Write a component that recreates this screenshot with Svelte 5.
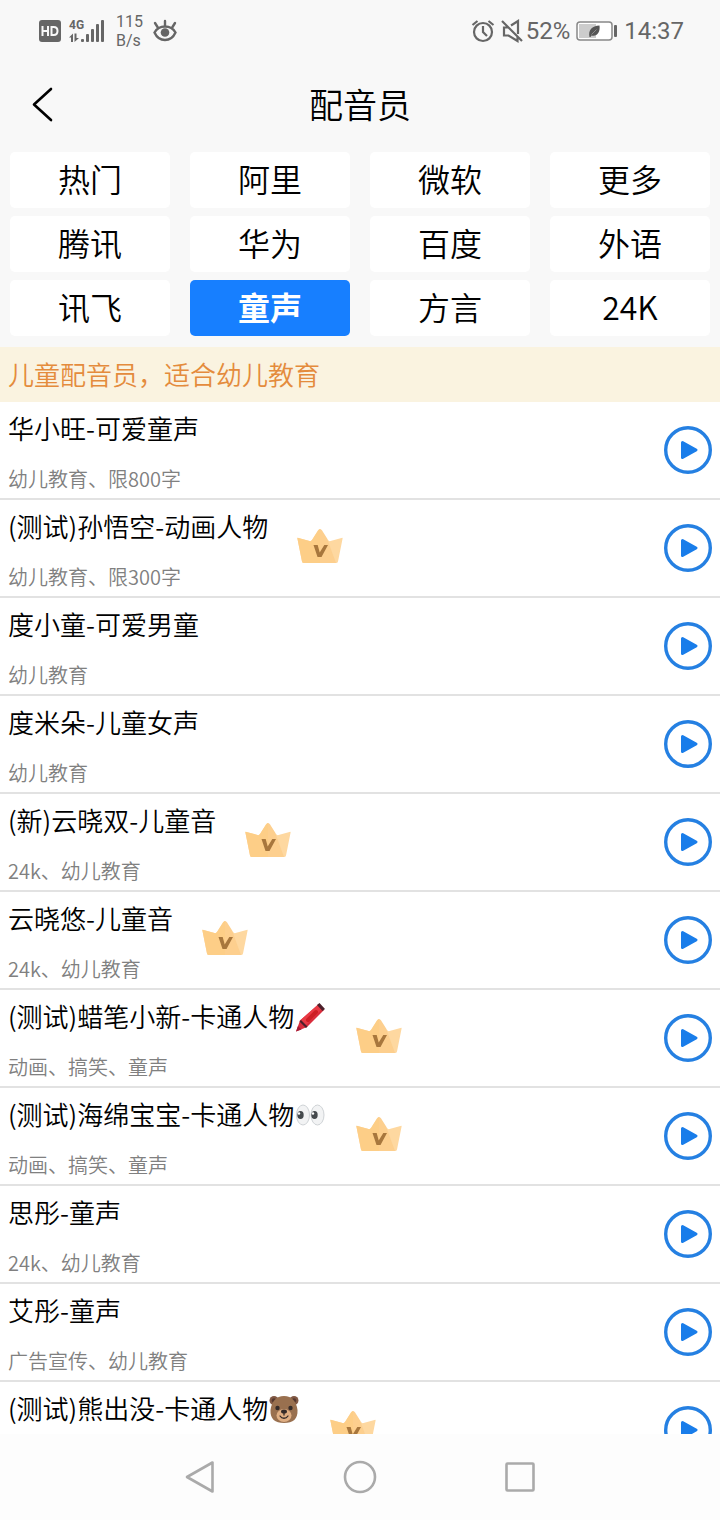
<script>
  let selected = $state('童声');
  const tabs = ['热门', '阿里', '微软', '更多', '腾讯', '华为', '百度', '外语', '讯飞', '童声', '方言', '24K'];
  const voices = [
    { name: '华小旺-可爱童声', tags: '幼儿教育、限800字' },
    { name: '(测试)孙悟空-动画人物', tags: '幼儿教育、限300字', vip: true },
    { name: '度小童-可爱男童', tags: '幼儿教育' },
    { name: '度米朵-儿童女声', tags: '幼儿教育' },
    { name: '(新)云晓双-儿童音', tags: '24k、幼儿教育', vip: true },
    { name: '云晓悠-儿童音', tags: '24k、幼儿教育', vip: true },
    { name: '(测试)蜡笔小新-卡通人物', tags: '动画、搞笑、童声', vip: true, emoji: 'crayon' },
    { name: '(测试)海绵宝宝-卡通人物', tags: '动画、搞笑、童声', vip: true, emoji: 'eyes' },
    { name: '思彤-童声', tags: '24k、幼儿教育' },
    { name: '艾彤-童声', tags: '广告宣传、幼儿教育' },
    { name: '(测试)熊出没-卡通人物', tags: '', vip: true, emoji: 'bear' }
  ];
</script>

<div class="screen">
  <div class="status">
    <div class="group left">
      <svg class="hd" width="22" height="22" viewBox="0 0 22 22">
        <rect width="22" height="22" rx="3" fill="#666" />
        <path d="M3.500 6v10M9 6v10M3.500 11H9M12.500 7v8h2.200c2.500 0 3.800-1.500 3.800-4s-1.300-4-3.800-4z" fill="none" stroke="#f8f8f8" stroke-width="2" />
      </svg>
      <div class="signal">
        <span class="gen">4G</span>
        <svg width="36" height="24" viewBox="0 0 36 24">
          <g fill="#666">
            <path d="M0 18.500L4 14.500V23H2v-4.500zM5.500 14.500h2V19H10L5.500 23z" />
            <rect x="12" y="20" width="3" height="3" rx="1" />
            <rect x="17" y="15" width="3" height="8" rx="1" />
            <rect x="22" y="10" width="3" height="13" rx="1" />
            <rect x="27" y="5" width="3" height="18" rx="1" />
            <rect x="32" y="1" width="3" height="22" rx="1" />
          </g>
        </svg>
      </div>
      <div class="speed"><span>115</span><span>B/s</span></div>
      <svg width="26" height="24" viewBox="0 0 26 24" fill="none" stroke="#666" stroke-width="2.400" stroke-linecap="round">
        <path d="M2.500 13.500C7 5.500 19 5.500 23.500 13.500C19 23.500 7 23.500 2.500 13.500zM13 2v5M3 4l2.500 4M23 4l-2.500 4" />
        <circle cx="13" cy="13.500" r="4.300" fill="#666" stroke="none" />
      </svg>
    </div>
    <div class="group right">
      <svg width="24" height="24" viewBox="0 0 24 24" fill="none" stroke="#666" stroke-width="2.200">
        <circle cx="12" cy="13" r="9" />
        <path d="M12 7v6l4 4M1.500 6L6.500 2M22.500 6l-5-4" />
      </svg>
      <svg class="mute" width="24" height="24" viewBox="0 0 24 24" fill="none" stroke="#666" stroke-width="2.200">
        <path d="M2 2l20 20M8 8.500H4v8h4.500l9 5.500v-5M11 6.500L18 2v13" />
      </svg>
      <span class="pct">52%</span>
      <svg class="battery" width="42" height="20" viewBox="0 0 42 20">
        <rect x="1" y="1" width="35" height="18" rx="3" fill="#fff" stroke="#888" stroke-width="1.500" />
        <rect x="3" y="3" width="17" height="14" fill="#ccc" />
        <path d="M13.500 16C12 9 16 5 23.500 4.500C24.500 11 21 16 15.500 14.500L14.500 16z" fill="#555" />
        <path d="M15.500 13.500l5-5" stroke="#999" stroke-width="0.800" />
        <rect x="38" y="4" width="3" height="12" rx="1" fill="#666" />
      </svg>
      <span class="clock">14:37</span>
    </div>
  </div>

  <header>
    <button class="back" aria-label="返回">
      <svg width="24" height="40" viewBox="0 0 24 40" fill="none" stroke="#000" stroke-width="2.600" stroke-linecap="round" stroke-linejoin="round">
        <path d="M19 5L2 20.500L19 36" />
      </svg>
    </button>
    <h1>配音员</h1>
  </header>

  <nav class="tabs">
    {#each tabs as tab}
      <button class:active={selected === tab} onclick={() => (selected = tab)}>{tab}</button>
    {/each}
  </nav>

  <p class="notice">儿童配音员，适合幼儿教育</p>

  <ul>
    {#each voices as voice}
      <li>
        <div class="info">
          <div class="name">
            <span>{voice.name}</span>
            {#if voice.emoji === 'crayon'}
              <svg width="33" height="32" viewBox="0 0 33 32">
                <path d="M2 30.500l4-11L25 3l5 6L13 26z" fill="#d92d3d" />
                <path d="M6 19.500L24 3.500l4 4.500L11 25z" fill="#e83a44" />
                <path d="M2 30.500l2-5.500 3.500 3.500z" fill="#a31d38" />
                <path d="M5.500 20.500L7 19l6.500 6.500L12 27zM23 4L25.500 2l5.500 6-2.500 2z" fill="#4c202b" />
                <path d="M14 19L22 11" stroke="#cd1f25" stroke-width="4" stroke-linecap="round" />
              </svg>
            {:else if voice.emoji === 'eyes'}
              <svg width="33" height="32" viewBox="0 0 33 32">
                <g fill="#f2f3f4" stroke="#cfd3d6" stroke-width="1">
                  <ellipse cx="9" cy="16" rx="6.500" ry="10" />
                  <ellipse cx="23.500" cy="16" rx="6.500" ry="10" />
                </g>
                <ellipse cx="6.500" cy="16" rx="3.200" ry="4" fill="#454a4d" />
                <ellipse cx="20.500" cy="16" rx="3.200" ry="4" fill="#454a4d" />
                <circle cx="5" cy="14.500" r="1.200" fill="#fff" />
                <circle cx="19" cy="14.500" r="1.200" fill="#fff" />
              </svg>
            {:else if voice.emoji === 'bear'}
              <svg width="33" height="32" viewBox="1 0 33 32">
                <g fill="#805844">
                  <circle cx="7" cy="7.500" r="4.500" />
                  <circle cx="27" cy="7.500" r="4.500" />
                </g>
                <circle cx="7" cy="7.500" r="2.200" fill="#55382f" />
                <circle cx="27" cy="7.500" r="2.200" fill="#55382f" />
                <path d="M17 3C25 3 29.500 9 30.500 17C31 26 26 30 17 30S3 26 3.500 17C4.500 9 9 3 17 3z" fill="#99704f" />
                <ellipse cx="17" cy="22.500" rx="7.500" ry="6.500" fill="#dfae83" />
                <circle cx="10.500" cy="15" r="2.200" fill="#352b29" />
                <circle cx="23.500" cy="15" r="2.200" fill="#352b29" />
                <ellipse cx="17" cy="18.500" rx="3" ry="2" fill="#352b29" />
                <path d="M17 20v2M13 23c2 3 6 3 8 0" fill="none" stroke="#352b29" stroke-width="1.300" stroke-linecap="round" />
              </svg>
            {/if}
          </div>
          <div class="tags">{voice.tags}</div>
        </div>
        {#if voice.vip}
          <svg class="crown" width="48" height="48" viewBox="0 0 48 48" role="img" aria-label="VIP">
            <path d="M2.500 14Q1 13 1.500 15L6 37.500Q6.300 39 8 39H40Q41.700 39 42 37.500L46.500 15Q47 13 45.500 14L34.500 17Q33 17.500 32 16L26 6.500Q24 3.500 22 6.500L16 16Q15 17.500 13.500 17z" fill="#fed8a0" />
            <path d="M24 5Q23 5 22 6.500L16 16Q15 17.500 13.500 17L2.500 14Q1 13 1.500 15L6 37.500Q6.300 39 8 39H24z" fill="#fdce87" />
            <path d="M24 5v34L40 39L31 14.500L26 6.500Q25 5 24 5z" fill="#fbc67c" opacity="0.500" />
            <path d="M17.500 21h4.200l2 7.500L28.300 21h3.700L25.500 33h-4z" fill="#a8773d" />
          </svg>
        {/if}
        <button class="play" aria-label="播放">
          <svg width="48" height="48" viewBox="0 0 48 48">
            <circle cx="24" cy="24" r="22.300" fill="#fff" stroke="#2580e2" stroke-width="3.400" />
            <path d="M18.500 16.500L32 24L18.500 31.500z" fill="#197dea" stroke="#197dea" stroke-width="3" stroke-linejoin="round" />
          </svg>
        </button>
      </li>
    {/each}
  </ul>

  <footer>
    <button aria-label="后退">
      <svg width="34" height="34" viewBox="0 0 34 34"><path d="M4 17L29.500 2.500V31.500z" /></svg>
    </button>
    <button aria-label="主页">
      <svg width="34" height="34" viewBox="0 0 34 34"><circle cx="17" cy="17" r="15" /></svg>
    </button>
    <button aria-label="最近任务">
      <svg width="34" height="34" viewBox="0 0 34 34"><rect x="3.500" y="3.500" width="27" height="27" rx="1" /></svg>
    </button>
  </footer>
</div>

<style>
  :global(body) {
    margin: 0;
    background: #fff;
  }
  .screen {
    display: flex;
    flex-direction: column;
    height: 100vh;
    background: #f8f8f8;
    color: #000;
    font-family: 'Noto Sans CJK SC', sans-serif;
    font-weight: 350;
  }
  svg {
    display: block;
    flex: none;
  }
  button {
    border: 0;
    padding: 0;
    background: none;
    font: inherit;
    color: inherit;
  }
  .status {
    display: flex;
    justify-content: space-between;
    align-items: center;
    height: 61px;
    padding: 0 36px 0 39px;
    color: #666;
    font-family: Roboto, sans-serif;
    font-weight: 400;
  }
  .group {
    display: flex;
    align-items: center;
  }
  .left {
    gap: 8px;
  }
  .signal {
    position: relative;
  }
  .gen {
    position: absolute;
    left: 0;
    top: 0;
    font: bold 12px/12px 'Roboto', sans-serif;
  }
  .speed {
    display: flex;
    flex-direction: column;
    margin: 0 1px 0 3px;
    font-size: 16px;
    line-height: 19px;
  }
  .mute {
    margin: 0 2px 0 5px;
  }
  .pct,
  .clock {
    font-size: 24px;
    line-height: 28px;
  }
  .battery {
    margin: 0 6px;
  }
  header {
    display: flex;
    align-items: center;
    justify-content: center;
    position: relative;
    height: 86px;
  }
  h1 {
    margin: 0;
    font-size: 34px;
    line-height: 48px;
    font-weight: inherit;
  }
  .back {
    position: absolute;
    left: 32px;
    top: 23px;
  }
  .tabs {
    display: grid;
    grid-template-columns: repeat(4, 1fr);
    gap: 8px 20px;
    padding: 5px 10px 11px;
  }
  .tabs button {
    padding-bottom: 4px;
    border-radius: 5px;
    background: #fff;
    font-size: 32px;
    line-height: 52px;
  }
  .tabs .active {
    background: #177fff;
    color: #fff;
    font-weight: 700;
  }
  .notice {
    margin: 0;
    padding: 0 8px 2px;
    background: #faf3e0;
    color: #e48b3c;
    font-size: 26px;
    line-height: 53px;
  }
  ul {
    flex: 1;
    min-height: 0;
    overflow: hidden;
    margin: 0;
    padding: 0;
    background: #fff;
    list-style: none;
  }
  li {
    display: flex;
    align-items: center;
    height: 96px;
    padding: 0 8px;
    border-bottom: 2px solid #e2e2e2;
  }
  .name {
    display: flex;
    align-items: center;
    height: 54px;
    font-size: 26px;
    line-height: 52px;
    white-space: nowrap;
  }
  .name span {
    padding-bottom: 2px;
  }
  .tags {
    min-height: 38px;
    margin-top: 4px;
    color: #808080;
    font-size: 20px;
    line-height: 38px;
    white-space: nowrap;
  }
  .crown {
    margin-left: 28px;
  }
  .play {
    margin-left: auto;
  }
  footer {
    display: flex;
    justify-content: center;
    align-items: center;
    gap: 126px;
    height: 86px;
    background: #fdfdfd;
  }
  footer svg {
    fill: none;
    stroke: #aaa;
    stroke-width: 2.6;
    stroke-linejoin: round;
  }
</style>
